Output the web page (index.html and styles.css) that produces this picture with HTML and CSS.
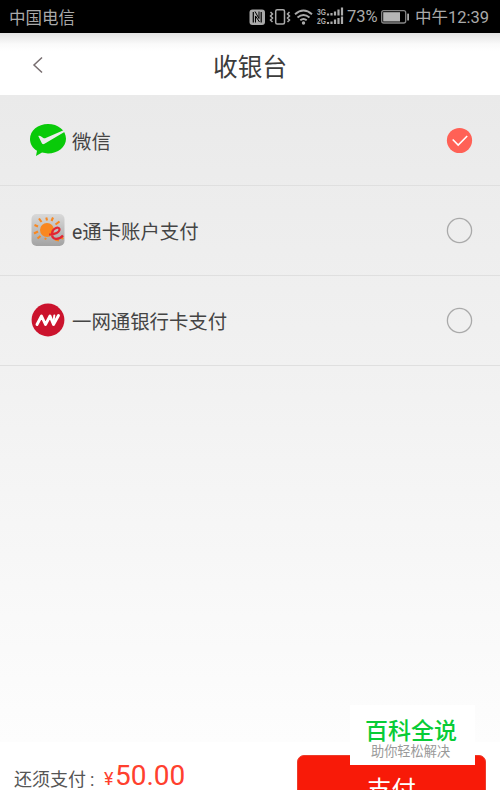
FILE: index.html
```
<!DOCTYPE html>
<html lang="zh-CN">
<head>
<meta charset="utf-8">
<title>收银台</title>
<link rel="stylesheet" href="styles.css">
</head>
<body>
<div class="status">
  <span class="carrier">中国电信</span>
  <svg class="status-icons" width="98" height="20" viewBox="0 0 98 20" fill="none" stroke="#aaa">
    <rect x=".5" y="2.500" width="15.500" height="15.500" rx="3" fill="#aaa" stroke="none"/>
    <path d="M4.300 15.500V5M12.200 15.500V5" stroke="#000" stroke-width="1.200"/>
    <path d="M6.500 15.500V9l4 6M10 4.500v7L6 4.500" stroke="#000" stroke-width="1"/>
    <rect x="26.700" y="2.700" width="8.800" height="14.200" rx="1.500" stroke-width="1.500"/>
    <path d="M21.500 5l2 2-2 2 2 2-2 2 2 2M40.500 5l-2 2 2 2-2 2 2 2-2 2" stroke-width="1.500"/>
    <path d="M46 7.300q8.500-7.500 17 0M48.500 10.500q6-5 12 0M51.300 13.300q3.200-2.700 6.400 0" stroke-width="1.900"/>
    <circle cx="54.500" cy="16" r="1.700" fill="#aaa" stroke="none"/>
    <text class="net" x="68" y="8.300" textLength="9" lengthAdjust="spacingAndGlyphs">3G</text>
    <text class="net" x="68" y="17.300" textLength="9" lengthAdjust="spacingAndGlyphs">2G</text>
    <path d="M79 8.500v-2M82.500 8.500v-2.500M86 8.500v-4M89.500 8.500v-6M93 8.500v-8M79 17v-2M82.500 17v-2.500M86 17v-4.500M89.500 17v-6M93 17v-7.500" stroke-width="2.200"/>
  </svg>
  <span class="percent">73%</span>
  <svg class="battery" width="30" height="16" viewBox="0 0 30 16">
    <rect x="1.700" y="1.700" width="24" height="12.300" rx="2" fill="none" stroke="#858585" stroke-width="1.300"/>
    <rect x="3.200" y="3.200" width="16.800" height="9.300" fill="#b5b5b5"/>
    <rect x="27.200" y="4.500" width="1.800" height="7" rx=".6" fill="#aaa"/>
  </svg>
  <span class="clock">中午12:39</span>
</div>
<header class="bar">
  <svg class="back" width="12" height="18" viewBox="0 0 12 18"><path d="M10 1.500L2 9l8 7.500" fill="none" stroke="#776d6f" stroke-width="1.500"/></svg>
  <h1 class="title">收银台</h1>
</header>
<main class="methods">
  <div class="row">
    <svg class="logo" width="38" height="36" viewBox="0 0 38 36">
      <path d="M19 2C9 2 1 8.500 1 17c0 5 2.600 9 7 11.700L7 34l6-3.400c2 .5 4 .8 6 .8 10 0 18-6.300 18-14.700S29 2 19 2z" fill="#09ca09"/>
      <path d="M9.300 14c1.300-1.200 3.200.8 5 1.900.8.500 1.600.4 2.400.1L34.500 8.200l1.300 1.600L15.500 21.700c-1.300.8-2.400.5-2.900-.9z" fill="#ececec"/>
    </svg>
    <span class="name">微信</span>
    <svg class="radio" width="27" height="27" viewBox="0 0 27 27"><circle cx="13.500" cy="13.500" r="12.600" fill="#ff6156"/><path d="M6.700 12.500l5.500 5.500 9-9" fill="none" stroke="#fff" stroke-width="1.600"/></svg>
  </div>
  <div class="row">
    <svg class="logo" width="38" height="36" viewBox="0 0 38 36">
      <defs><linearGradient id="tile" x1="0" y1="0" x2="0" y2="1"><stop offset="0" stop-color="#d9d9d9"/><stop offset="1" stop-color="#a3a3a3"/></linearGradient></defs>
      <rect x="2.500" y="2" width="33" height="32" rx="5" fill="url(#tile)"/>
      <circle cx="18" cy="18" r="7" fill="#f98720"/>
      <path d="M9 14.500l-3.500-1.500M12.500 10l-2.500-3.500M18 8.500L17.300 5.500M22.500 9l1.500-3.500M26.500 12.500l4-3M9 19.500l-4 2M11.500 24l-3 2.500M17 26l-1 1.500M32 24.500l2 2.500M26 27.500l4 1" stroke="#f98720" stroke-width="2.100"/>
      <path d="M20 22.500c6 0 11-2.300 10.500-5.500-.6-2.700-7.500-1.200-7.500 5 0 6.500 7 6 11 1.500" fill="none" stroke="#e32632" stroke-width="2.200"/>
    </svg>
    <span class="name">e通卡账户支付</span>
    <svg class="radio" width="27" height="27" viewBox="0 0 27 27"><circle cx="13.500" cy="13.500" r="12.100" fill="none" stroke="#aaa" stroke-width="1.300"/></svg>
  </div>
  <div class="row">
    <svg class="logo" width="38" height="36" viewBox="0 0 38 36">
      <circle cx="19" cy="18" r="16.400" fill="#cb132d"/>
      <path d="M8 22.500l4.500-8.500 4 8.500 4.500-8.500 3.500 8.500 5-9" fill="none" stroke="#fff" stroke-width="2.900" stroke-linejoin="round" stroke-linecap="round"/>
      <path d="M25.300 13.500l-1 8" fill="none" stroke="#fff" stroke-width="2" stroke-linecap="round"/>
    </svg>
    <span class="name">一网通银行卡支付</span>
    <svg class="radio" width="27" height="27" viewBox="0 0 27 27"><circle cx="13.500" cy="13.500" r="12.100" fill="none" stroke="#aaa" stroke-width="1.300"/></svg>
  </div>
</main>
<footer class="footer">
  <span class="due">还须支付<span class="colon">:</span></span>
  <span class="yen">¥</span><span class="amount">50.00</span>
  <button class="pay">支付</button>
</footer>
<aside class="badge">
  <strong class="brand">百科全说</strong>
  <span class="slogan">助你轻松解决</span>
</aside>
</body>
</html>
```
FILE: styles.css
```
* { box-sizing: border-box; }
body {
  margin: 0;
  width: 500px;
  height: 790px;
  overflow: hidden;
  position: relative;
  display: flex;
  flex-direction: column;
  background: #fff;
  font-family: Roboto, "Noto Sans CJK SC", sans-serif;
  color: #444;
}
svg { display: block; flex: none; }
.status {
  flex: none;
  height: 33px;
  padding: 1px 0 0 9px;
  display: flex;
  align-items: center;
  background: #000;
  color: #aaa;
  font-size: 16.500px;
  line-height: 32px;
  white-space: nowrap;
}
.carrier { width: 240px; padding-top: 3px; }
.status-icons { width: 98px; }
.net { font: bold 8.500px "Liberation Sans", sans-serif; fill: #aaa; stroke: none; }
.percent { width: 33px; font-size: 16.500px; }
.battery { margin-right: 5px; }
.clock { font-size: 16.500px; padding-top: 2px; }
.bar {
  flex: none;
  height: 62px;
  display: flex;
  align-items: center;
  padding-left: 32px;
  background: linear-gradient(#e2e2e2, #fafafa 11px, #fff 18px);
}
.back { margin-top: 1px; }
.title {
  margin: 7px 0 0 169px;
  font-size: 24.700px;
  line-height: 36px;
  font-weight: 400;
  color: #3c3c3c;
}
.methods {
  flex: none;
  height: 647px;
  background: linear-gradient(#eaeaea, #f1f1f1 42%, #fdfdfd);
}
.row {
  height: 90px;
  padding: 0 27px 0 29px;
  display: flex;
  align-items: center;
  box-shadow: 0 1px #dfdfdf;
}
.name {
  flex: 1;
  margin-left: 5px;
  padding-top: 5px;
  font-size: 19.400px;
  line-height: 28px;
}
.footer {
  flex: none;
  height: 48px;
  padding-left: 14px;
  display: flex;
  align-items: flex-start;
  white-space: nowrap;
}
.due { width: 90px; margin-top: 25px; font-size: 18px; line-height: 26px; color: #555; }
.colon { margin-left: 4px; }
.yen { width: 11px; margin-top: 24px; font-size: 18px; line-height: 26px; color: #ff402e; }
.amount { width: 182px; margin-top: 19px; font-size: 28px; line-height: 30px; color: #ff402e; }
.pay {
  flex: none;
  width: 189px;
  height: 66px;
  margin-top: 13px;
  padding: 6px 0 0;
  border: 1px solid #ec3c2c;
  border-radius: 7px;
  background: #f81a08;
  color: #fff;
  font-family: inherit;
  font-size: 24.500px;
  line-height: 58px;
}
.badge {
  position: absolute;
  left: 350px;
  top: 705px;
  width: 125px;
  height: 60px;
  padding-left: 15px;
  background: #fff;
  white-space: nowrap;
}
.brand { display: block; margin-top: 10px; font-size: 23px; line-height: 28px; font-weight: 500; color: #08cc36; font-family: "Noto Sans CJK SC", sans-serif; }
.slogan { display: block; margin-left: 6px; font-size: 13.200px; line-height: 18px; color: #999; }
```
